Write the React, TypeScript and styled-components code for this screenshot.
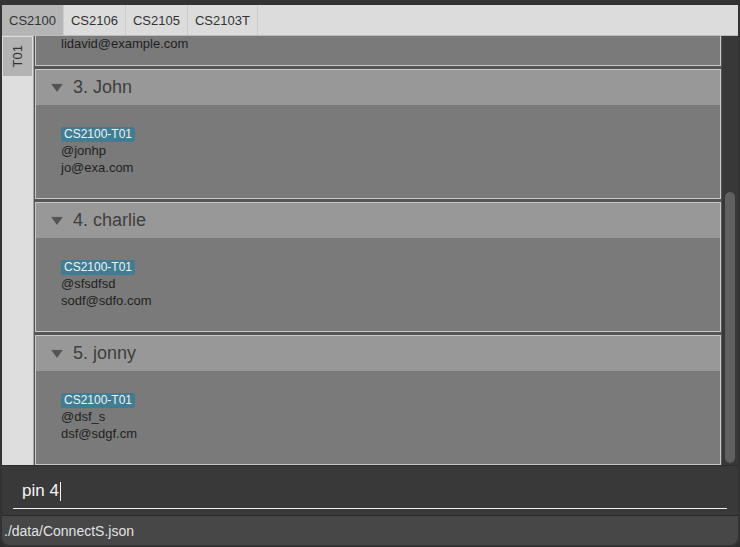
import React, { useEffect, useRef } from "react";
import styled, { createGlobalStyle } from "styled-components";

interface Person {
  index: number;
  name: string;
  tag: string;
  lines: string[];
}

const people: Person[] = [
  { index: 1, name: "Alex Yeoh", tag: "CS2100-T01", lines: ["@alexyeoh", "alexyeoh@example.com"] },
  { index: 2, name: "David Li", tag: "CS2100-T01", lines: ["91031282", "@davidli", "lidavid@example.com"] },
  { index: 3, name: "John", tag: "CS2100-T01", lines: ["@jonhp", "jo@exa.com"] },
  { index: 4, name: "charlie", tag: "CS2100-T01", lines: ["@sfsdfsd", "sodf@sdfo.com"] },
  { index: 5, name: "jonny", tag: "CS2100-T01", lines: ["@dsf_s", "dsf@sdgf.cm"] },
];

const modules = ["CS2100", "CS2106", "CS2105", "CS2103T"];

const VIEW_HEIGHT = 429;
const CARD_PERIOD = 133;
const CARD_GAP = 3;

const GlobalStyle = createGlobalStyle`
  body {
    margin: 0;
    background: #2c2c2c;
    font-family: "Liberation Sans", Arial, sans-serif;
  }
`;

const Window = styled.div`
  width: 740px;
  height: 547px;
  box-sizing: border-box;
  padding: 5px 2px 1px;
  background: #333333;
  display: flex;
  flex-direction: column;
  border-radius: 0 0 9px 9px;
`;

const TabBar = styled.div`
  height: 31px;
  box-sizing: border-box;
  display: flex;
  background: #dcdcdc;
  border-bottom: 1px solid #bcbcbc;
`;

const Tab = styled.div<{ $active?: boolean }>`
  display: flex;
  align-items: center;
  padding: 0 7px;
  font-size: 13px;
  color: #333;
  border-right: 1px solid #cbcbcb;
  background: ${({ $active }) => ($active ? "#b5b5b5" : "transparent")};
`;

const Main = styled.div`
  height: ${VIEW_HEIGHT}px;
  display: flex;
`;

const SideBar = styled.div`
  width: 32px;
  box-sizing: border-box;
  padding: 1px;
  background: #dedede;
  border-right: 1px solid #a4a4a4;
`;

const SideTab = styled.div`
  height: 39px;
  display: flex;
  align-items: center;
  justify-content: center;
  background: #b3b3b3;
  font-size: 13px;
  color: #333;

  span {
    writing-mode: vertical-rl;
    transform: rotate(180deg);
  }
`;

const ListViewport = styled.div`
  flex: 1;
  overflow: hidden;
  background: #555555;
  padding: 0 1px;
`;

const Card = styled.div`
  border: 1px solid #c9c9c9;
  background: #7a7a7a;
  margin-bottom: ${CARD_GAP}px;

  &:last-child {
    margin-bottom: 0;
  }
`;

const CardHeader = styled.div`
  height: 35px;
  display: flex;
  align-items: center;
  padding-left: 14px;
  background: #989898;
`;

const Title = styled.div`
  margin-left: 9px;
  font-size: 18px;
  color: #3e3e3e;
`;

const CardBody = styled.div`
  height: 93px;
  display: flex;
  flex-direction: column;
  justify-content: center;
  align-items: flex-start;
  padding-left: 25px;
`;

const Tag = styled.span`
  height: 15px;
  line-height: 15px;
  padding: 0 3px;
  border-radius: 2px;
  background: #407d92;
  color: #f2f2f2;
  font-size: 12px;
`;

const Line = styled.div`
  line-height: 17px;
  font-size: 13px;
  color: #1f1f1f;
`;

const Track = styled.div`
  width: 16px;
  box-sizing: border-box;
  padding: 2px 3px;
  background: #383838;
  display: flex;
  flex-direction: column;
  justify-content: flex-end;
`;

const Thumb = styled.div`
  width: 10px;
  border-radius: 5px;
  background: #606060;
`;

const CommandArea = styled.div`
  height: 50px;
  box-sizing: border-box;
  border-top: 1px solid #2c2c2c;
  background: #393939;
  padding: 8px 11px 0;
`;

const CommandField = styled.div`
  height: 34px;
  display: flex;
  align-items: center;
  padding-left: 9px;
  border-bottom: 1px solid #f0f0f0;
  font-size: 17px;
  color: #f4f4f4;
`;

const Caret = styled.span`
  width: 1px;
  height: 19px;
  margin-left: 1px;
  background: #f4f4f4;
`;

const StatusBar = styled.div`
  height: 30px;
  box-sizing: border-box;
  border-top: 1px solid #2b2b2b;
  background: #474747;
  border-radius: 0 0 8px 8px;
  display: flex;
  align-items: center;
  padding-left: 2px;
  font-size: 14px;
  color: #e2e2e2;
`;

const Arrow = () => (
  <svg width="14" height="10" viewBox="0 0 14 10">
    <polygon points="0.5,0.5 13.5,0.5 7,9.5" fill="#545454" stroke="#a8a8a8" strokeWidth="0.6" />
  </svg>
);

const App: React.FC = () => {
  const listRef = useRef<HTMLDivElement>(null);

  useEffect(() => {
    if (listRef.current) listRef.current.scrollTop = listRef.current.scrollHeight;
  }, []);

  const contentHeight = people.length * CARD_PERIOD - CARD_GAP;
  const thumbHeight = Math.round(((VIEW_HEIGHT - 4) * VIEW_HEIGHT) / contentHeight) - 4;

  return (
    <>
      <GlobalStyle />
      <Window>
        <TabBar>
          {modules.map((m, i) => (
            <Tab key={m} $active={i === 0}>
              {m}
            </Tab>
          ))}
        </TabBar>
        <Main>
          <SideBar>
            <SideTab>
              <span>T01</span>
            </SideTab>
          </SideBar>
          <ListViewport ref={listRef}>
            {people.map((p) => (
              <Card key={p.index}>
                <CardHeader>
                  <Arrow />
                  <Title>
                    {p.index}. {p.name}
                  </Title>
                </CardHeader>
                <CardBody>
                  <Tag>{p.tag}</Tag>
                  {p.lines.map((l) => (
                    <Line key={l}>{l}</Line>
                  ))}
                </CardBody>
              </Card>
            ))}
          </ListViewport>
          <Track>
            <Thumb style={{ height: thumbHeight }} />
          </Track>
        </Main>
        <CommandArea>
          <CommandField>
            pin 4<Caret />
          </CommandField>
        </CommandArea>
        <StatusBar>./data/ConnectS.json</StatusBar>
      </Window>
    </>
  );
};

export default App;
